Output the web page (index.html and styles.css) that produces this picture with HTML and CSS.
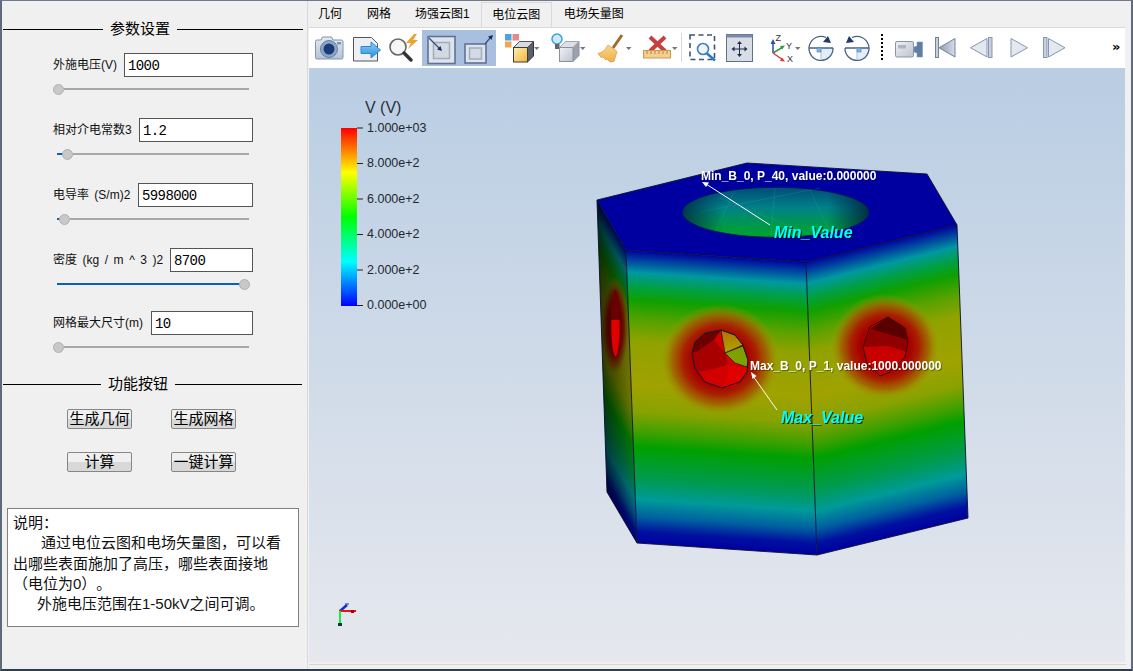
FILE: index.html
```html
<!DOCTYPE html>
<html lang="zh">
<head>
<meta charset="utf-8">
<title>电位云图</title>
<link rel="stylesheet" href="styles.css">
</head>
<body>
<div class="window">
  <aside class="panel">
    <div class="section-title"><span>参数设置</span></div>
    <div class="param">
      <div class="param-row"><label>外施电压(V)</label><input class="w129" value="1000"></div>
      <div class="slider"><i class="fill"></i><i class="thumb"></i><i class="rest"></i></div>
    </div>
    <div class="param">
      <div class="param-row"><label>相对介电常数3</label><input class="w114" value="1.2"></div>
      <div class="slider"><i class="fill f9"></i><i class="thumb"></i><i class="rest"></i></div>
    </div>
    <div class="param">
      <div class="param-row"><label class="spaced-s">电导率 (S/m)2</label><input class="w115" value="5998000"></div>
      <div class="slider"><i class="fill f6"></i><i class="thumb"></i><i class="rest"></i></div>
    </div>
    <div class="param short">
      <div class="param-row"><label class="spaced-l">密度 (kg / m ^ 3 )2</label><input class="w83" value="8700"></div>
      <div class="slider"><i class="fill f186"></i><i class="thumb"></i></div>
    </div>
    <div class="param last">
      <div class="param-row"><label>网格最大尺寸(m)</label><input class="w102" value="10"></div>
      <div class="slider"><i class="fill"></i><i class="thumb"></i><i class="rest"></i></div>
    </div>
    <div class="section-title second"><span>功能按钮</span></div>
    <div class="buttons">
      <button>生成几何</button><button>生成网格</button>
      <button>计算</button><button>一键计算</button>
    </div>
    <div class="info">
      <div>说明：</div>
      <div class="indent-a">通过电位云图和电场矢量图，可以看</div>
      <div>出哪些表面施加了高压，哪些表面接地</div>
      <div>（电位为0）。</div>
      <div class="indent-b">外施电压范围在1-50kV之间可调。</div>
    </div>
  </aside>

  <main class="main">
    <nav class="tabs">
      <span class="tab t1">几何</span>
      <span class="tab t2">网格</span>
      <span class="tab t3">场强云图1</span>
      <span class="tab active">电位云图</span>
      <span class="tab t5">电场矢量图</span>
    </nav>

    <div class="toolbar">
      <svg width="39" height="40" viewBox="309 28 39 40">
        <path d="M315.5 41.5q0-1.500 1.500-1.500h4l1.500-3h9l1.500 3h8.500q1.500 0 1.500 1.500v16q0 1.500-1.500 1.500h-24.500q-1.500 0-1.500-1.500z" fill="url(#gCam)" stroke="#7f94ad"/>
        <circle cx="329" cy="49" r="8.500" fill="#8ea6c4" stroke="#5f7fa8"/>
        <circle cx="329" cy="49" r="5.500" fill="#1c3a78"/>
        <rect x="337" y="42" width="4" height="2.500" fill="#7f94ad"/>
      </svg>
      <svg width="37" height="40" viewBox="348 28 37 40">
        <path d="M353.500 37.500h18l6 6v17.500h-24z" fill="#eceff3" stroke="#555"/>
        <path d="M361 46.500h10v-4.500l9.500 8-9.500 8v-4.500h-10z" fill="url(#gArrow)" stroke="#2f88cf"/>
      </svg>
      <svg width="37" height="40" viewBox="385 28 37 40">
        <circle cx="398" cy="47" r="8" fill="#f4f6f8" stroke="#666" stroke-width="1.600"/>
        <path d="M404 53l7 7" stroke="#333" stroke-width="3.500" stroke-linecap="round"/>
        <path d="M414 34l-8 9h5l-3 6 10-9h-5l4-6z" fill="#f0a030"/>
      </svg>
      <div class="tool-group">
        <svg width="38" height="36" viewBox="422 30 38 36">
          <rect x="428" y="36.500" width="27" height="27" fill="#dfe4ec" stroke="#5f7296" stroke-width="1.600"/>
          <rect x="433.500" y="42.500" width="16" height="16" fill="#d3dae4" stroke="#a4afbd" stroke-width="1.600"/>
          <path d="M429 38l11 11" stroke="#3a4f78" stroke-width="1.200"/>
          <path d="M442 51l-5-1.500 3.500-3.500z" fill="#1d2f60"/>
        </svg>
        <svg width="36" height="36" viewBox="460 30 36 36">
          <rect x="465" y="44" width="21" height="19" fill="#dfe4ec" stroke="#5f7296" stroke-width="1.600"/>
          <rect x="469.500" y="48" width="12" height="11" fill="#d3dae4" stroke="#a4afbd" stroke-width="1.600"/>
          <path d="M485 44l5-6" stroke="#3a4f78" stroke-width="1.200"/>
          <path d="M493 35l-5 1.500 3.500 3.500z" fill="#1d2f60"/>
        </svg>
      </div>
      <svg width="50" height="40" viewBox="496 28 50 40">
        <rect x="505" y="34" width="6.500" height="6.500" fill="#4ba3e3"/>
        <rect x="512.500" y="34" width="6.500" height="6.500" fill="#e58a8a"/>
        <rect x="505" y="41.500" width="6.500" height="6" fill="#f0a84a"/>
        <path d="M513.500 47.500l6-6h14v14.500l-6 6z" fill="#59616e" stroke="#333"/>
        <path d="M513.500 47.500l6-6h14l-6 6z" fill="#d7dbe1" stroke="#555"/>
        <rect x="513.500" y="47.500" width="14" height="14.500" fill="url(#gYellow)" stroke="#3c3c3c"/>
        <path d="M534 47h5.500l-2.750 3z" fill="#777"/>
      </svg>
      <svg width="45" height="40" viewBox="546 28 45 40">
        <circle cx="557" cy="39" r="5" fill="#cfe8fa" stroke="#38a0e2" stroke-width="1.500"/>
        <rect x="555" y="44" width="4.500" height="5" fill="#666"/>
        <path d="M559.500 47.500l6-6h13.500v14l-6 6z" fill="#9aa3ad" stroke="#8a929c"/>
        <path d="M559.500 47.500l6-6h13.500l-6 6z" fill="#dde0e5" stroke="#a0a6ae"/>
        <rect x="559.500" y="47.500" width="13.500" height="14" fill="url(#gGray)" stroke="#8a929c"/>
        <path d="M580 47h5.500l-2.750 3z" fill="#777"/>
      </svg>
      <svg width="46" height="40" viewBox="591 28 46 40">
        <path d="M622 35l-9 13" stroke="#a06a30" stroke-width="3"/>
        <path d="M608 45l9 6.500-3 10-4 .5-3-3-1 1-3-3-2 .5-3-4q6-1 10-8.500z" fill="url(#gBroom)" stroke="#c89040" stroke-width=".6"/>
        <path d="M626 47h5.500l-2.750 3z" fill="#777"/>
      </svg>
      <svg width="44" height="40" viewBox="637 28 44 40">
        <path d="M650 37l15 14M665 37l-15 14" stroke="#c64040" stroke-width="4"/>
        <rect x="643.500" y="50.500" width="27" height="7.500" fill="#f3d08f" stroke="#c89a50"/>
        <path d="M647 51v3M651 51v3M655 51v3M659 51v3M663 51v3M667 51v3" stroke="#b5853f"/>
        <path d="M672 47h5.500l-2.750 3z" fill="#777"/>
      </svg>
      <i class="sep"></i>
      <svg width="32" height="40" viewBox="688 28 32 40">
        <rect x="690" y="35" width="24.500" height="24.500" fill="none" stroke="#3c5578" stroke-width="1.600" stroke-dasharray="5 3.500"/>
        <circle cx="703" cy="49" r="5.500" fill="#eef4fa" stroke="#3a7fc0" stroke-width="1.600"/>
        <path d="M707 53.500l8 7" stroke="#2a78c8" stroke-width="2.600"/>
      </svg>
      <svg width="45" height="40" viewBox="720 28 45 40">
        <rect x="726.500" y="34.500" width="26" height="27" fill="#d8dde6" stroke="#5f7090"/>
        <rect x="726.500" y="34.500" width="26" height="3" fill="#7a8aa5"/>
        <path d="M739.500 43v12M733.500 49h12" stroke="#1f2f4f"/>
        <path d="M739.500 41l-2.500 3h5zM739.500 57l-2.500-3h5zM731.500 49l3-2.500v5zM747.500 49l-3-2.500v5z" fill="#1f2f4f"/>
      </svg>
      <svg width="41" height="40" viewBox="765 28 41 40">
        <path d="M773 53v-11" stroke="#2a4fa8" stroke-width="1.500"/>
        <path d="M773 39l-2.500 5h5z" fill="#2a4fa8"/>
        <path d="M773 53l10-6" stroke="#2f9a48" stroke-width="1.500"/>
        <path d="M785 45.500l-5 .5 2 3.500z" fill="#2f9a48"/>
        <path d="M773 53l10 7" stroke="#d83a3a" stroke-width="1.500"/>
        <path d="M785 61.500l-5-.5 2-3.500z" fill="#d83a3a"/>
        <text x="775.500" y="41" class="axis-label">Z</text>
        <text x="786" y="49" class="axis-label">Y</text>
        <text x="787" y="61.500" class="axis-label">X</text>
        <path d="M795 47h5.500l-2.750 3z" fill="#777"/>
      </svg>
      <svg width="34" height="40" viewBox="806 28 34 40">
        <path d="M821 48h12a12 12 0 0 1-12 12z" fill="#e2eef9"/>
        <path d="M826 37.500a12 12 0 1 0 7 10.500M809 48h24" fill="none" stroke="#4a6288" stroke-width="1.300"/>
        <path d="M821 48v12" stroke="#a8c4e0"/>
        <rect x="817" y="48" width="4" height="4" fill="#7fb8e8" stroke="#4f7fb0" stroke-width=".6"/>
        <path d="M831 43l-8-1 5-6z" fill="#1f3a6a"/>
      </svg>
      <svg width="36" height="40" viewBox="840 28 36 40">
        <path d="M857 48h12a12 12 0 0 1-12 12z" fill="#e2eef9"/>
        <path d="M852 37.500a12 12 0 1 1-7 10.500M845 48h24" fill="none" stroke="#4a6288" stroke-width="1.300"/>
        <path d="M857 48v12" stroke="#a8c4e0"/>
        <rect x="857" y="48" width="4" height="4" fill="#7fb8e8" stroke="#4f7fb0" stroke-width=".6"/>
        <path d="M846 43l8-1-5-6z" fill="#1f3a6a"/>
      </svg>
      <i class="dots"></i>
      <svg width="40" height="40" viewBox="888 28 40 40">
        <rect x="895.500" y="41.500" width="18" height="15.500" rx="1.500" fill="url(#gGray)" stroke="#8795ab"/>
        <rect x="898" y="45" width="8" height="3.500" fill="#aeb6c2"/>
        <path d="M914 47l3-1v-4h5.500v15h-5.500v-4l-3-1z" fill="#5f7ea6" stroke="#8795ab" stroke-width=".6"/>
      </svg>
      <svg width="35" height="40" viewBox="928 28 35 40">
        <rect x="935.500" y="37.500" width="3" height="20" fill="#c9d0da" stroke="#6f84a5"/>
        <path d="M955 38.500v18.500l-16-9.250z" fill="url(#gStep)" stroke="#6f84a5"/>
      </svg>
      <svg width="37" height="40" viewBox="963 28 37 40">
        <path d="M987 38.500v18.500l-16.500-9.250z" fill="#e4e8ef" stroke="#8497b5"/>
        <rect x="988.500" y="37.500" width="3.500" height="20" fill="#c9d0da" stroke="#8497b5"/>
      </svg>
      <svg width="36" height="40" viewBox="1000 28 36 40">
        <path d="M1011 38.500v18.500l16.500-9.250z" fill="#e4e8ef" stroke="#8497b5"/>
      </svg>
      <svg width="44" height="40" viewBox="1036 28 44 40">
        <rect x="1043.500" y="37.500" width="3.500" height="20" fill="#c9d0da" stroke="#8497b5"/>
        <path d="M1048.500 38.500v18.500l16.500-9.250z" fill="#e4e8ef" stroke="#8497b5"/>
      </svg>
      <span class="more">»</span>
    </div>

    <div class="viewport">
      <svg class="scene" width="816" height="594" viewBox="309 68 816 594">
        <defs>
          <linearGradient id="gCam" x1="0" y1="0" x2="0" y2="1"><stop offset="0" stop-color="#e4eaf1"/><stop offset="1" stop-color="#b4c3d5"/></linearGradient>
          <linearGradient id="gArrow" x1="0" y1="0" x2="0" y2="1"><stop offset="0" stop-color="#86cff7"/><stop offset="1" stop-color="#2f8fdb"/></linearGradient>
          <linearGradient id="gYellow" x1="0" y1="0" x2="1" y2="1"><stop offset="0" stop-color="#fff0b0"/><stop offset="1" stop-color="#f4b43c"/></linearGradient>
          <linearGradient id="gGray" x1="0" y1="0" x2="1" y2="1"><stop offset="0" stop-color="#f0f2f5"/><stop offset="1" stop-color="#bcc3cd"/></linearGradient>
          <linearGradient id="gBroom" x1="0" y1="0" x2="0" y2="1"><stop offset="0" stop-color="#f8d888"/><stop offset="1" stop-color="#f0ae48"/></linearGradient>
          <linearGradient id="gStep" x1="0" y1="0" x2="1" y2="0"><stop offset="0" stop-color="#8f9bad"/><stop offset="1" stop-color="#d8dde5"/></linearGradient>

          <linearGradient id="legend" x1="0" y1="0" x2="0" y2="1">
            <stop offset="0" stop-color="#ff0000"/><stop offset=".25" stop-color="#ffff00"/>
            <stop offset=".5" stop-color="#00ff00"/><stop offset=".75" stop-color="#00ffff"/>
            <stop offset="1" stop-color="#0000ff"/>
          </linearGradient>

          <linearGradient id="field" gradientUnits="userSpaceOnUse" x1="716" y1="256" x2="696.600" y2="547">
            <stop offset="0" stop-color="#0000a0"/><stop offset=".04" stop-color="#0050a0"/>
            <stop offset=".075" stop-color="#0098a0"/><stop offset=".125" stop-color="#00a040"/>
            <stop offset=".17" stop-color="#10a000"/><stop offset=".24" stop-color="#58a200"/>
            <stop offset=".31" stop-color="#90a200"/><stop offset=".46" stop-color="#a0a200"/>
            <stop offset=".55" stop-color="#88a200"/><stop offset=".62" stop-color="#40a000"/>
            <stop offset=".67" stop-color="#00a000"/><stop offset=".78" stop-color="#009a50"/>
            <stop offset=".85" stop-color="#009a9a"/><stop offset=".91" stop-color="#0060a0"/>
            <stop offset=".96" stop-color="#0010a0"/><stop offset="1" stop-color="#0000a0"/>
          </linearGradient>
          <linearGradient id="fieldR" href="#field" gradientUnits="userSpaceOnUse" x1="881" y1="243" x2="949.700" y2="522.400"/>
          <linearGradient id="fieldL" href="#field" gradientUnits="userSpaceOnUse" x1="611.500" y1="225" x2="492.500" y2="293.800"/>

          <radialGradient id="blob">
            <stop offset="0" stop-color="#a80000"/><stop offset=".46" stop-color="#a80000"/>
            <stop offset=".62" stop-color="#a82000"/><stop offset=".8" stop-color="#a06000" stop-opacity=".85"/>
            <stop offset="1" stop-color="#a0a000" stop-opacity="0"/>
          </radialGradient>
          <linearGradient id="shadeL" x1="0" y1="0" x2="1" y2="0">
            <stop offset="0" stop-color="#000" stop-opacity=".72"/><stop offset="1" stop-color="#000" stop-opacity=".2"/>
          </linearGradient>
          <linearGradient id="well" x1="0" y1="0" x2="0" y2="1">
            <stop offset="0" stop-color="#004a78"/><stop offset=".4" stop-color="#008088"/>
            <stop offset=".75" stop-color="#00984c"/><stop offset="1" stop-color="#00a428"/>
          </linearGradient>
          <linearGradient id="wellEdge" x1="0" y1="0" x2="1" y2="0">
            <stop offset="0" stop-color="#001838" stop-opacity=".7"/><stop offset=".22" stop-color="#001838" stop-opacity="0"/>
            <stop offset=".78" stop-color="#001838" stop-opacity="0"/><stop offset="1" stop-color="#001838" stop-opacity=".8"/>
          </linearGradient>
          <linearGradient id="topCell" x1="0" y1="0" x2="0" y2="1"><stop offset="0" stop-color="#b87000"/><stop offset="1" stop-color="#a8a800"/></linearGradient>
          <clipPath id="clipF"><path d="M626 250L806 262L817 555L637 543Z"/></clipPath>
          <clipPath id="clipR"><path d="M806 262L957 225L968 518L817 555Z"/></clipPath>
          <clipPath id="clipL"><path d="M597 200L626 250L637 543L607 492Z"/></clipPath>
        </defs>

        <text x="365" y="113" class="legend-title">V (V)</text>
        <rect x="341" y="128" width="16" height="178" fill="url(#legend)"/>
        <path d="M357 128h6M357 163.500h6M357 199h6M357 234.500h6M357 270h6M357 305.500h6" stroke="#222" fill="none"/>
        <text x="367" y="132" class="legend-label">1.000e+03</text>
        <text x="367" y="167" class="legend-label">8.000e+2</text>
        <text x="367" y="203" class="legend-label">6.000e+2</text>
        <text x="367" y="238" class="legend-label">4.000e+2</text>
        <text x="367" y="274" class="legend-label">2.000e+2</text>
        <text x="367" y="309" class="legend-label">0.000e+00</text>

        <path d="M597 200L626 250L637 543L607 492Z" fill="url(#fieldL)"/>
        <g clip-path="url(#clipL)"><ellipse cx="615" cy="327" rx="14" ry="50" fill="url(#blob)"/></g>
        <path d="M597 200L626 250L637 543L607 492Z" fill="url(#shadeL)"/>
        <ellipse cx="615.500" cy="327" rx="4.500" ry="30" fill="#e00000" stroke="#400" stroke-width=".6"/>
        <path d="M611 320a4.500 30 0 0 1 9 0z" fill="#6a0000"/>

        <path d="M626 250L806 262L817 555L637 543Z" fill="url(#field)"/>
        <g clip-path="url(#clipF)"><ellipse cx="720" cy="360" rx="60" ry="56" fill="url(#blob)"/></g>

        <path d="M806 262L957 225L968 518L817 555Z" fill="url(#fieldR)"/>
        <g clip-path="url(#clipR)"><ellipse cx="885" cy="347" rx="55" ry="53" fill="url(#blob)"/></g>

        <path d="M597 200L747 163L927 174L957 225L806 262L626 250Z" fill="#0000a0"/>
        <ellipse cx="775.700" cy="212.300" rx="93.300" ry="25" fill="url(#well)"/>
        <path d="M735 190l-20 42M775 188l-4 48M810 190l20 42M700 212l120-24M720 198l90 36" stroke="#30c0a8" stroke-width=".6" opacity=".3" fill="none"/>
        <ellipse cx="775.700" cy="212.300" rx="93.300" ry="25" fill="url(#wellEdge)" stroke="#001050" stroke-width=".8"/>

        <path d="M692 353L695 342L705 333L721 330L735 335L743 345L748 360L747 372L740 382L722 388L705 382L695 368Z" fill="#d20000"/>
        <path d="M692 353L695 342L705 333L721 330L714 340L697 352Z" fill="#6a0000"/>
        <path d="M697 352L714 340L725 353L728 365L700 372L695 368L692 353Z" fill="#a80000"/>
        <path d="M721 330L735 335L743 345L725 353Z" fill="url(#topCell)" stroke="#201000" stroke-width=".7"/>
        <path d="M725 353L743 346L748 360L747 367L735 363Z" fill="#80a000" stroke="#201000" stroke-width=".7"/>
        <path d="M728 365L747 368L747 372L735 386L722 388L728 372Z" fill="#e00000"/>
        <path d="M692 353L695 342L705 333L721 330L735 335L743 345L748 360L747 372L740 382L722 388L705 382L695 368Z" fill="none" stroke="#102030"/>

        <path d="M863 347L870 327L888 317L905 328L908 342L905 357L890 372L880 376L867 363Z" fill="#c80000"/>
        <path d="M870 329L888 317L905 328L907 340Z" fill="#5a0000"/>
        <path d="M863 347L870 329L907 340L907 352L888 346Z" fill="#900000"/>
        <path d="M863 347L870 327L888 317L905 328L908 342L905 357L890 372L880 376L867 363Z" fill="none" stroke="#301010"/>

        <path d="M597 200L747 163L927 174L957 225L968 518L817 555L637 543L607 492Z M626 250L637 543 M806 262L817 555 M597 200L626 250L806 262L957 225" fill="none" stroke="#0c1030" stroke-width=".9"/>

        <path d="M770 225L706 184" stroke="#fff"/>
        <path d="M702 182l7 .5-3 4.500z" fill="#fff"/>
        <path d="M777 410L753 376" stroke="#fff"/>
        <path d="M751 372l5.500 4-4 3z" fill="#fff"/>

        <text x="701" y="180" class="probe">Min_B_0, P_40, value:0.000000</text>
        <text x="750" y="370" class="probe">Max_B_0, P_1, value:1000.000000</text>
        <text x="774" y="238" class="probe-title">Min_Value</text>
        <text x="781" y="423" class="probe-title">Max_Value</text>

        <path d="M340 611l7-6" stroke="#1030d0" stroke-width="2.500"/>
        <path d="M345 604h4" stroke="#1030d0" stroke-width="1"/>
        <path d="M339 611h17" stroke="#f01010" stroke-width="2"/>
        <path d="M351 610h3v3h-3z" fill="#a00000"/>
        <path d="M340 611v14" stroke="#10f040" stroke-width="2"/>
        <path d="M338 623h4v3h-4z" fill="#084020"/>
      </svg>
    </div>
    <div class="status-line"></div>
  </main>
</div>
</body>
</html>
```
FILE: styles.css
```css
* { box-sizing: border-box; }
html, body { margin: 0; padding: 0; }
body {
  width: 1133px;
  height: 671px;
  overflow: hidden;
  font-family: "Liberation Sans", "Noto Sans CJK SC", sans-serif;
  color: #000;
  background: #f0f0f0;
  text-spacing-trim: space-all;
}
.window {
  width: 1133px;
  height: 671px;
  display: flex;
  background: #f0f0f0;
  border-top: 1px solid #6c7a89;
  border-left: 2px solid #5d6b7a;
  border-right: 2px solid #5d6b7a;
  border-bottom: 2px solid #2f3d4d;
}

/* left panel */
.panel {
  width: 305px;
  flex: none;
  padding-top: 17px;
}
.section-title {
  height: 22px;
  display: flex;
  align-items: center;
  gap: 7px;
  margin: 0 4px 13px 1px;
  font-size: 15px;
  line-height: 22px;
}
.section-title::before,
.section-title::after {
  content: "";
  flex: 1;
  height: 1px;
  background: #000;
}
.section-title::before { flex: none; width: 100px; }
.section-title.second { margin: 0 5px 14px 1px; }
.section-title.second::before { width: 98px; }

.param { height: 65px; padding-left: 51px; }
.param.short { height: 63px; }
.param.last { height: 62px; }
.param-row {
  width: 200px;
  height: 24px;
  display: flex;
  align-items: center;
  justify-content: space-between;
}
.param-row label {
  font-size: 12px;
  white-space: nowrap;
  color: #111;
  line-height: 18px;
}
.spaced-s { word-spacing: 2px; }
.spaced-l { word-spacing: 2.2px; }
.param-row input {
  height: 24px;
  border: 1px solid #555;
  border-radius: 0;
  padding: 2px 0 0 3px;
  font-family: "Liberation Mono", monospace;
  font-size: 14px;
  letter-spacing: -.6px;
  background: #fff;
  color: #000;
  outline: none;
}
.w129 { width: 129px; }
.w114 { width: 114px; }
.w115 { width: 115px; }
.w83 { width: 83px; }
.w102 { width: 102px; }

.slider {
  width: 192px;
  height: 12px;
  margin: 6px 0 0 4px;
  display: flex;
  align-items: center;
}
.slider i { display: block; flex: none; }
.fill { height: 2px; width: 0; background: #0a62b4; }
.f9 { width: 9px; }
.f6 { width: 6px; }
.f186 { width: 186px; }
.thumb {
  width: 11px;
  height: 11px;
  margin-left: -4px;
  border-radius: 50%;
  background: #c8c8c8;
  border: 1px solid #b0b0b0;
}
.slider .rest { flex: 1; height: 2px; background: #a8a8a8; }

.buttons {
  display: grid;
  grid-template-columns: 65px 65px;
  column-gap: 39px;
  row-gap: 23px;
  padding-left: 65px;
}
.buttons button {
  height: 20px;
  padding: 0;
  font-family: inherit;
  font-size: 15px;
  line-height: 18px;
  color: #000;
  border: 1px solid #868686;
  border-radius: 2px;
  background: linear-gradient(#f0f0f0 0, #f0f0f0 50%, #d8d8d8 50%, #d8d8d8 100%);
}
.info {
  width: 292px;
  height: 119px;
  margin: 36px 0 0 5px;
  padding: 4px 0 0 5px;
  border: 1px solid #808080;
  background: #fff;
  font-size: 15px;
  line-height: 20.25px;
  white-space: nowrap;
  color: #111;
}
.indent-a { padding-left: 28px; }
.indent-b { padding-left: 24px; }

/* right column */
.main {
  flex: 1;
  min-width: 0;
  display: flex;
  flex-direction: column;
  padding-left: 2px;
  box-shadow: inset 1px 0 0 #d9d9d9;
}
.tabs {
  height: 26px;
  display: flex;
  align-items: flex-start;
  padding-top: 1px;
  font-size: 12px;
  line-height: 25px;
  white-space: nowrap;
}
.tab { display: block; height: 25px; }
.t1 { margin-left: 9px; }
.t2 { margin-left: 25px; }
.t3 { margin-left: 24px; }
.t5 { margin-left: 12px; }
.tab.active {
  margin-left: 11px;
  width: 71px;
  text-align: center;
  border: 1px solid #d9d9d9;
  border-bottom: 0;
  line-height: 24px;
}
.toolbar {
  height: 41px;
  margin-right: 6px;
  display: flex;
  align-items: flex-start;
  background: #fff;
  border-top: 1px solid #d9d9d9;
}
.toolbar svg { display: block; flex: none; }
.tool-group {
  display: flex;
  width: 74px;
  height: 36px;
  margin-top: 2px;
  overflow: hidden;
  background: #a9bfe0;
  flex: none;
}
.axis-label {
  font-family: "Liberation Sans", sans-serif;
  font-size: 9px;
  fill: #333;
}
.sep { display: block; flex: none; width: 1px; height: 29px; margin: 5px 6px 0 0; background: #d8d8d8; }
.dots {
  display: block;
  flex: none;
  width: 2px;
  height: 26px;
  margin: 6px 5px 0 5px;
  background: repeating-linear-gradient(#000 0 2px, transparent 2px 4px);
}
.more {
  flex: 1;
  padding: 9px 0 0 32px;
  font-family: "DejaVu Sans", sans-serif;
  font-size: 13px;
  font-weight: 700;
  line-height: 20px;
}
.viewport {
  height: 594px;
  margin-right: 6px;
  background: linear-gradient(#b9cde3, #e6e8ee);
}
.scene { display: block; overflow: hidden; }
.status-line {
  height: 1px;
  margin: 2px 5px 0 0;
  background: #d6d6d6;
}
.legend-title {
  font-family: "Liberation Sans", sans-serif;
  font-size: 16px;
  fill: #2a2f3a;
}
.legend-label {
  font-family: "Liberation Sans", sans-serif;
  font-size: 12.5px;
  fill: #23282f;
}
.probe {
  font-family: "Liberation Sans", sans-serif;
  font-size: 12px;
  font-weight: 700;
  fill: #fff;
  filter: drop-shadow(1px 1px 0 rgba(0, 0, 0, .35));
}
.probe-title {
  font-family: "Liberation Sans", sans-serif;
  font-size: 16px;
  font-weight: 700;
  font-style: italic;
  fill: #00ffff;
  filter: drop-shadow(1px 1px 0 rgba(0, 0, 0, .7));
}
```
